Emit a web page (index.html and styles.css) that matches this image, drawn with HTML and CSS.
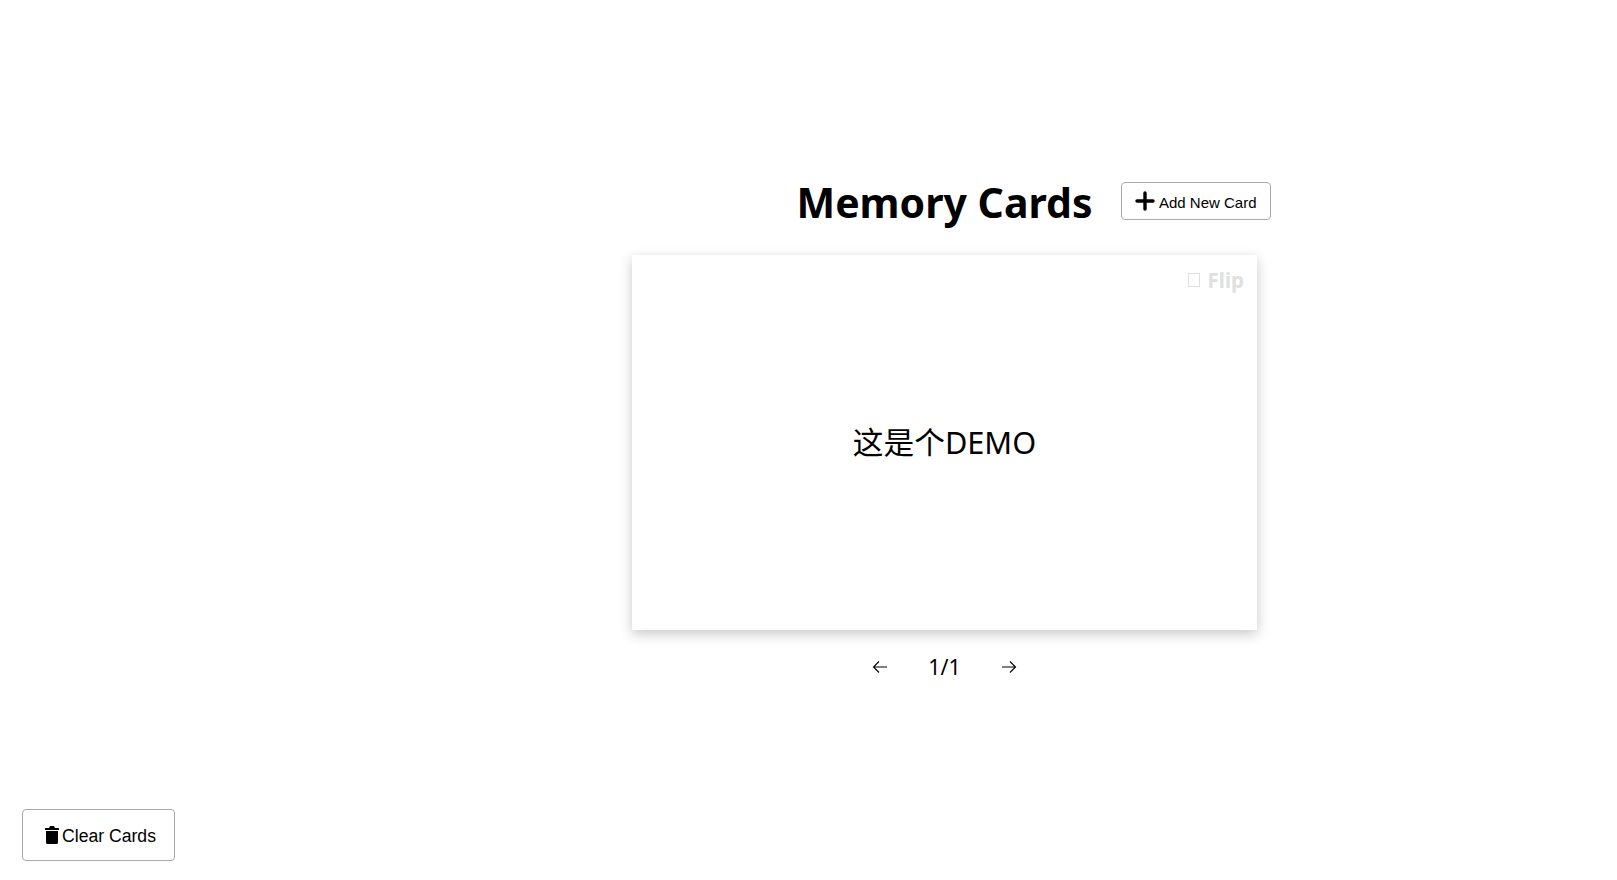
FILE: index.html
```html
<!DOCTYPE html>
<html lang="en">
<head>
    <meta charset="UTF-8">
    <title>Memory Cards</title>
    <link rel="stylesheet" href="styles.css">
</head>
<body>
    <main class="app">
        <header class="header">
            <h1 class="title">Memory Cards</h1>
            <button class="btn btn-add">
                <svg class="icon-plus" viewBox="0 0 20 20" width="20" height="20"><path d="M10 2v16M2 10h16" stroke="#000" stroke-width="3.4" stroke-linecap="round"/></svg>
                <span class="btn-label">Add New Card</span>
            </button>
        </header>

        <section class="card">
            <div class="flip"><span class="flip-box"></span>Flip</div>
            <p class="card-text">这是个DEMO</p>
        </section>

        <nav class="nav">
            <button class="nav-btn"><svg viewBox="0 0 16 16" width="16" height="16"><path d="M15 8H1.5M7 2.5L1.5 8L7 13.5" fill="none" stroke="#000" stroke-width="1.1"/></svg></button>
            <span class="nav-count">1/1</span>
            <button class="nav-btn"><svg viewBox="0 0 16 16" width="16" height="16"><path d="M1 8h13.5M9 2.5L14.5 8L9 13.5" fill="none" stroke="#000" stroke-width="1.1"/></svg></button>
        </nav>
    </main>

    <button class="btn btn-clear">
        <svg viewBox="0 0 14 18" width="14" height="18"><path d="M5 0h4l1 2h4v2H0V2h4zM1 5h12v11.5a1.5 1.5 0 0 1-1.5 1.5h-9A1.5 1.5 0 0 1 1 16.5z" fill="#000"/></svg>
        <span class="btn-label">Clear Cards</span>
    </button>
</body>
</html>
```

FILE: styles.css
```css
body {
    margin: 0;
    height: 880px;
    overflow: hidden;
    background-color: #fff;
    font-family: "Noto Sans", "Noto Sans CJK SC", sans-serif;
    color: #000;
}
.app {
    display: flex;
    flex-direction: column;
    align-items: center;
    margin-left: 272px;
    padding-top: 176px;
}
.header {
    position: relative;
    width: 625px;
    height: 79px;
    text-align: center;
}
.title {
    margin: 0;
    font-size: 41px;
    line-height: 52px;
    font-weight: 700;
}
.btn {
    display: flex;
    align-items: center;
    background: #fff;
    border: 1px solid #a9a9a9;
    border-radius: 4px;
    font-family: "Liberation Sans", sans-serif;
    color: #000;
}
.btn-label {
    padding-top: 2px;
}
.btn-add {
    position: absolute;
    top: 6px;
    left: 489px;
    width: 150px;
    height: 38px;
    padding: 0 13px;
    font-size: 15px;
    gap: 4px;
    white-space: nowrap;
}
.card {
    position: relative;
    display: flex;
    align-items: center;
    justify-content: center;
    width: 625px;
    height: 375px;
    background: #fff;
    box-shadow: 0 4px 12px rgba(0, 0, 0, 0.22);
}
.card-text {
    margin: 0 0 5px;
    font-size: 30.7px;
}
.flip {
    position: absolute;
    top: 11px;
    right: 13px;
    display: flex;
    align-items: center;
    gap: 8px;
    font-size: 20.5px;
    font-weight: 700;
    color: #e0e0e0;
}
.flip-box {
    width: 10px;
    height: 12px;
    border: 1px solid #e0e0e0;
}
.nav {
    display: flex;
    align-items: center;
    justify-content: center;
    gap: 36px;
    margin-top: 22px;
}
.nav-btn {
    display: flex;
    width: 24px;
    height: 30px;
    align-items: center;
    justify-content: center;
    padding: 0;
    background: none;
    border: none;
}
.nav-count {
    font-size: 21.5px;
    line-height: 30px;
}
.btn-clear {
    position: fixed;
    left: 22px;
    bottom: 19px;
    width: 153px;
    height: 52px;
    padding: 0 0 0 4px;
    justify-content: center;
    gap: 3px;
    font-size: 17.6px;
}
```
